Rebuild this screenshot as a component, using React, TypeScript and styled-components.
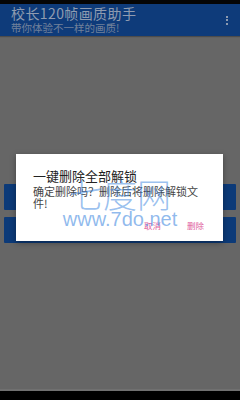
import React from 'react'
import styled, { createGlobalStyle } from 'styled-components'

const GlobalStyle = createGlobalStyle`
  html, body {
    margin: 0;
    padding: 0;
    background: #666666;
  }
  #root {
    width: 240px;
    height: 400px;
    overflow: hidden;
  }
`

const Screen = styled.div`
  position: relative;
  width: 240px;
  height: 400px;
  display: flex;
  flex-direction: column;
  background: #666666;
  font-family: 'Noto Sans CJK SC', 'Liberation Sans', sans-serif;
`

const StatusBar = styled.div`
  height: 4px;
  background: #050505;
`

const AppBar = styled.div`
  height: 32px;
  background: #0e3b7a;
  display: flex;
  align-items: center;
  justify-content: space-between;
  padding: 0 8px 0 11px;
  box-shadow: 0 1px 1px rgba(0, 0, 0, 0.25);
`

const TitleBlock = styled.div`
  display: flex;
  flex-direction: column;
`

const Title = styled.div`
  color: #8f9bb0;
  font-size: 14px;
  line-height: 15px;
  letter-spacing: 0.4px;
`

const Subtitle = styled.div`
  color: #72819a;
  font-size: 10.5px;
  line-height: 13px;
`

const MenuDots = styled.div`
  display: flex;
  flex-direction: column;
  gap: 1.5px;
  padding-right: 4px;
  span {
    width: 2px;
    height: 2px;
    background: #8d9bb0;
  }
`

const Content = styled.div`
  flex: 1;
  display: flex;
  flex-direction: column;
  gap: 7px;
  padding: 148px 4px 0 4px;
`

const ActionButton = styled.div`
  height: 26px;
  background: #0c3a78;
  border-radius: 1px;
`

const NavBar = styled.div`
  height: 9px;
  background: #000000;
  border-top: 2px solid #707070;
`

const Dialog = styled.div`
  position: absolute;
  left: 16px;
  top: 154px;
  width: 207px;
  height: 87px;
  background: #ffffff;
  box-shadow: 0 2px 6px rgba(0, 0, 0, 0.35);
  display: flex;
  flex-direction: column;
  padding: 13px 24px 0 17px;
  box-sizing: border-box;
`

const DialogTitle = styled.div`
  color: #222222;
  font-size: 13px;
  line-height: 18px;
`

const DialogMessage = styled.div`
  color: #444444;
  font-size: 11px;
  line-height: 12px;
`

const DialogActions = styled.div`
  display: flex;
  justify-content: flex-end;
  gap: 26px;
  margin-top: 11px;
  margin-right: -5px;
`

const DialogButton = styled.div`
  color: #e0619c;
  font-size: 8.5px;
  line-height: 10px;
`

const Watermark = styled.div`
  position: absolute;
  left: 68px;
  top: 176px;
  width: 104px;
  display: flex;
  flex-direction: column;
  align-items: center;
  pointer-events: none;
`

const WatermarkLogo = styled.div`
  font-family: 'Noto Sans CJK SC', sans-serif;
  font-size: 34px;
  line-height: 36px;
  font-weight: 300;
  color: rgba(70, 140, 225, 0.55);
`

const WatermarkUrl = styled.div`
  font-family: 'Liberation Sans', Arial, sans-serif;
  font-size: 20px;
  line-height: 14px;
  color: rgba(70, 140, 225, 0.6);
`

export default function App() {
  return (
    <Screen>
      <GlobalStyle />
      <StatusBar />
      <AppBar>
        <TitleBlock>
          <Title>校长120帧画质助手</Title>
          <Subtitle>带你体验不一样的画质!</Subtitle>
        </TitleBlock>
        <MenuDots>
          <span />
          <span />
          <span />
        </MenuDots>
      </AppBar>
      <Content>
        <ActionButton />
        <ActionButton />
      </Content>
      <NavBar />
      <Dialog>
        <DialogTitle>一键删除全部解锁</DialogTitle>
        <DialogMessage>确定删除吗？删除后将删除解锁文件!</DialogMessage>
        <DialogActions>
          <DialogButton>取消</DialogButton>
          <DialogButton>删除</DialogButton>
        </DialogActions>
      </Dialog>
      <Watermark>
        <WatermarkLogo>七度网</WatermarkLogo>
        <WatermarkUrl>www.7do.net</WatermarkUrl>
      </Watermark>
    </Screen>
  )
}
